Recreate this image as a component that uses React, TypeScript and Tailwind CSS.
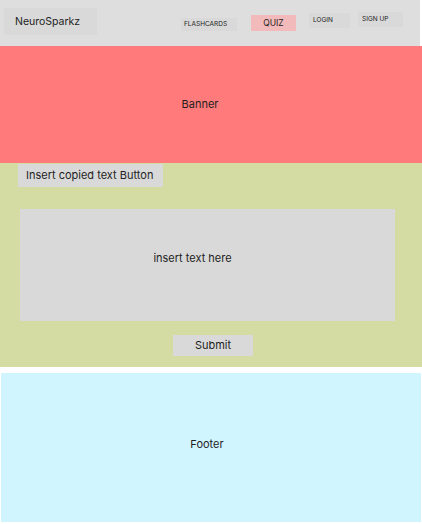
export default function App() {
    return (
        <div className="w-[422px] h-[524px] bg-white font-['Inter',sans-serif] text-[#1e1e1e]">
            {/* Header */}
            <div className="h-[46px] w-[420px] bg-[#dedede] flex items-start">
                <div className="ml-[4px] mt-[8px] w-[93px] h-[27px] bg-[#d9d9d9] flex items-center pl-[11px] text-[10.5px]">
                    NeuroSparkz
                </div>
                <div className="ml-[84px] mt-[18px] w-[56px] h-[13px] bg-[#d9d9d9] flex items-center pl-[3px] text-[6.5px]">
                    FLASHCARDS
                </div>
                <div className="ml-[14px] mt-[15px] w-[45px] h-[16px] bg-[#f2baba] flex items-center justify-center text-[8.5px]">
                    QUIZ
                </div>
                <div className="ml-[13px] mt-[13px] w-[41px] h-[15px] bg-[#d9d9d9] flex items-center pl-[4px] text-[6.5px]">
                    LOGIN
                </div>
                <div className="ml-[8px] mt-[12px] w-[45px] h-[15px] bg-[#d9d9d9] flex items-center pl-[4px] text-[6.5px]">
                    SIGN UP
                </div>
            </div>

            {/* Banner */}
            <div className="h-[117px] bg-[#ff7b7b] flex items-center justify-center pr-[22px] text-[11px]">
                Banner
            </div>

            {/* Main */}
            <div className="h-[204px] bg-[#d4dca4] flex flex-col items-start">
                <button className="ml-[18px] mt-[1px] w-[145px] h-[23px] bg-[#d9d9d9] flex items-center justify-start pl-[8px] text-[11px] whitespace-nowrap">
                    Insert copied text Button
                </button>
                <div className="ml-[20px] mt-[22px] w-[375px] h-[112px] bg-[#d9d9d9] flex items-center justify-center pr-[30px] pb-[14px] text-[11px]">
                    insert text here
                </div>
                <button className="ml-[173px] mt-[14px] w-[80px] h-[21px] bg-[#d9d9d9] flex items-center justify-center text-[11px]">
                    Submit
                </button>
            </div>

            {/* Footer */}
            <div className="mt-[6px] ml-[1px] w-[420px] h-[149px] bg-[#d1f5fe] flex items-center justify-center pr-[8px] pb-[7px] text-[11px]">
                Footer
            </div>
        </div>
    );
}
